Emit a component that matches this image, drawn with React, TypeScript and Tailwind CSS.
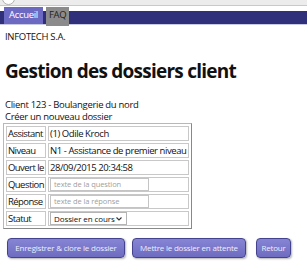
import React from "react";

const font = { fontFamily: '"Open Sans", "Noto Sans", sans-serif' };

function Row({ label, children }: { label: string; children: React.ReactNode }) {
  return (
    <tr>
      <td className="border border-[#c8c8c8] pl-[1px] pr-[1px] h-[15px] leading-[12px] whitespace-nowrap tracking-[-0.55px]">{label}</td>
      <td className="border border-[#c8c8c8] pl-[1px] pr-[1px] h-[15px] leading-[12px] whitespace-nowrap tracking-[-0.42px]">{children}</td>
    </tr>
  );
}

export default function App() {
  return (
    <div className="w-[307px] h-[265px] bg-white overflow-hidden text-[#111] text-[9.5px] tracking-[-0.3px]" style={font}>
      <div className="h-[6px] bg-[#ececec] border-b border-[#c9c9c9] relative overflow-hidden">
        <div className="absolute left-[2px] top-[-8px] w-[13px] h-[13px] rounded-full border border-[#b0b0b0] bg-white" />
      </div>
      <div className="mt-[1px] h-[19px] flex items-start gap-[3px] pl-[4px] bg-[linear-gradient(to_bottom,transparent_4px,#2f3079_4px,#2f3079_17px,#c9cae6_17px,#c9cae6_18px,transparent_18px)]">
        <div className="h-[17px] px-[5px] bg-[#6b69c2] text-white flex items-center">Accueil</div>
        <div className="h-[19px] px-[3px] bg-[#8b8b8b] text-[#222] flex items-center pb-[2px]">FAQ</div>
      </div>
      <div className="px-[5px]">
        <div className="mt-[5px] leading-[12px]">INFOTECH S.A.</div>
        <h1 className="mt-[17px] text-[19px] font-bold leading-[22px] tracking-[-0.75px]">Gestion des dossiers client</h1>
        <div className="mt-[17px] leading-[12px]">Client 123 - Boulangerie du nord</div>
        <div className="leading-[12px]">Créer un nouveau dossier</div>
        <table className="border-separate border-spacing-[2px] border border-[#b8b8b8] border-b-[#888] border-r-[#888] ml-[-2px]">
          <tbody>
            <Row label="Assistant">(1) Odile Kroch</Row>
            <Row label="Niveau">N1 - Assistance de premier niveau</Row>
            <Row label="Ouvert le">28/09/2015 20:34:58</Row>
            <Row label="Question">
              <div className="w-[99px] h-[13px] border border-[#c4c4c4] text-[#a0a0a0] text-[7.5px] tracking-[-0.1px] leading-[11px] px-[3px]">texte de la question</div>
            </Row>
            <Row label="Réponse">
              <div className="w-[99px] h-[13px] border border-[#c4c4c4] text-[#a0a0a0] text-[7.5px] tracking-[-0.1px] leading-[11px] px-[3px]">texte de la réponse</div>
            </Row>
            <Row label="Statut">
              <div className="w-[77px] h-[13px] border border-[#b4b4b4] text-[8px] tracking-[-0.1px] leading-[11px] pl-[3px] pr-[4px] flex items-center justify-between">
                <span>Dossier en cours</span>
                <svg width="6" height="4" viewBox="0 0 6 4"><path d="M0.5 0.5 L3 3 L5.5 0.5" stroke="#333" strokeWidth="1.1" fill="none" /></svg>
              </div>
            </Row>
          </tbody>
        </table>
        <div className="mt-[9px] flex ml-[2px]">
          <button className="w-[118px] h-[20px] rounded-[4px] border border-[#45438e] bg-[linear-gradient(to_bottom,#8684d4,#6e6cc0)] text-[#eeeeff] text-[8px] tracking-[-0.2px] whitespace-nowrap shadow-[1px_1px_2px_rgba(0,0,0,0.3)]">
            Enregistrer &amp; clore le dossier
          </button>
          <button className="ml-[7px] w-[114px] h-[20px] rounded-[4px] border border-[#45438e] bg-[linear-gradient(to_bottom,#8684d4,#6e6cc0)] text-[#eeeeff] text-[8px] tracking-[-0.2px] whitespace-nowrap shadow-[1px_1px_2px_rgba(0,0,0,0.3)]">
            Mettre le dossier en attente
          </button>
          <button className="ml-[10px] w-[35px] h-[20px] rounded-[4px] border border-[#45438e] bg-[linear-gradient(to_bottom,#8684d4,#6e6cc0)] text-[#eeeeff] text-[8px] tracking-[-0.2px] whitespace-nowrap shadow-[1px_1px_2px_rgba(0,0,0,0.3)]">
            Retour
          </button>
        </div>
      </div>
    </div>
  );
}
